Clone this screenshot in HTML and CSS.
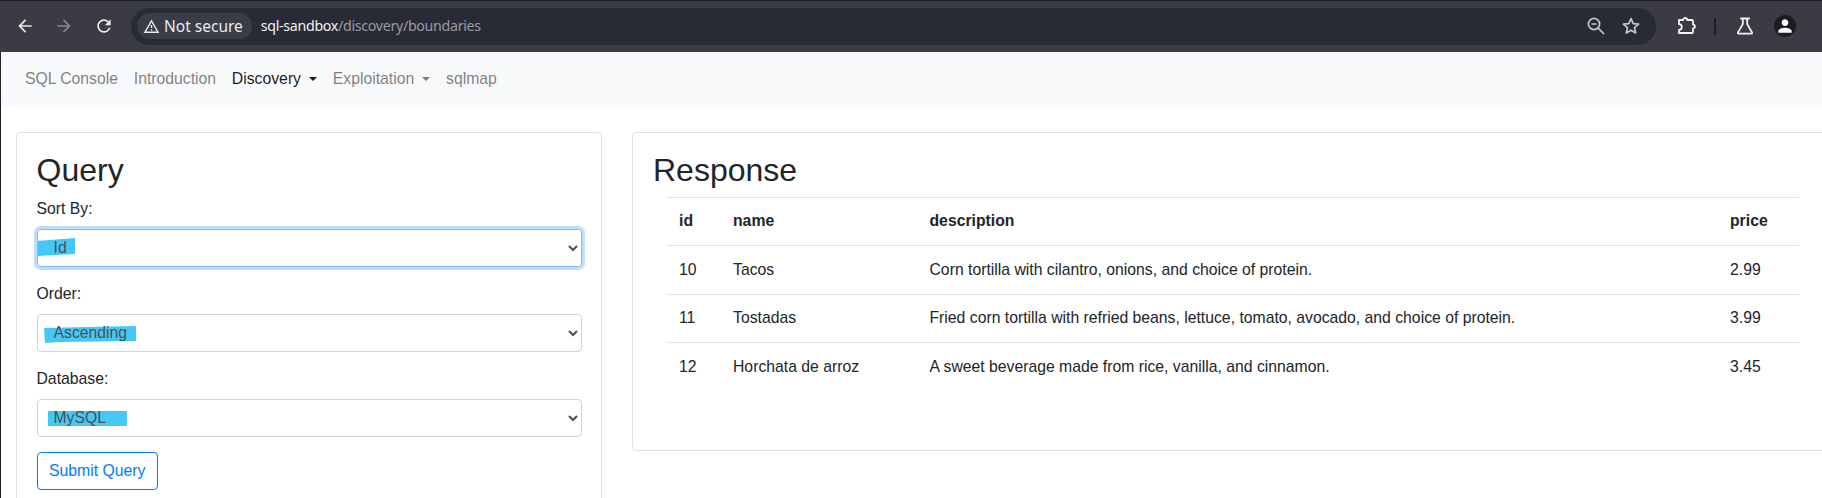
FILE: index.html
```html
<!DOCTYPE html>
<html lang="en">
<head>
<meta charset="utf-8">
<title>SQL Sandbox</title>
<link rel="stylesheet" href="styles.css">
</head>
<body>
<header class="chrome">
  <button class="tb tb-back" aria-label="Back"><svg viewBox="0 0 24 24" width="20" height="20"><path d="M20 11H7.83l5.59-5.59L12 4l-8 8 8 8 1.41-1.41L7.83 13H20v-2z"/></svg></button>
  <button class="tb tb-fwd" aria-label="Forward"><svg viewBox="0 0 24 24" width="20" height="20"><path d="M12 4l-1.41 1.41L16.17 11H4v2h12.17l-5.58 5.59L12 20l8-8z"/></svg></button>
  <button class="tb tb-reload" aria-label="Reload"><svg viewBox="0 0 24 24" width="20" height="20"><path d="M17.65 6.35A7.958 7.958 0 0 0 12 4c-4.42 0-7.99 3.58-7.99 8s3.57 8 7.99 8c3.73 0 6.84-2.55 7.73-6h-2.08A5.99 5.99 0 0 1 12 18c-3.31 0-6-2.69-6-6s2.69-6 6-6c1.66 0 3.14.69 4.22 1.78L13 11h7V4l-2.35 2.35z"/></svg></button>
  <div class="omnibox">
    <span class="chip"><svg viewBox="0 0 24 24" width="17" height="17"><path d="M12 5.99L19.53 19H4.47L12 5.99M12 2L1 21h22L12 2zm1 14h-2v2h2v-2zm0-6h-2v4h2v-4z"/></svg>Not secure</span>
    <span class="url"><span class="host">sql-sandbox</span>/discovery/boundaries</span>
    <span class="omni-actions">
      <svg class="omni-line" viewBox="0 0 20 20" width="20" height="20"><circle cx="8" cy="8" r="5.6"/><path d="M5.5 8h5M12.2 12.2L18 18"/></svg>
      <svg class="omni-line" viewBox="0 0 20 20" width="20" height="20"><polygon points="10,2.6 12.2,7.6 17.6,8.1 13.5,11.7 14.7,17 10,14.2 5.3,17 6.5,11.7 2.4,8.1 7.8,7.6"/></svg>
    </span>
  </div>
  <div class="tools">
    <svg class="tool-line" viewBox="0 0 20 20" width="20" height="20"><path d="M3 4h4.2a2 2 0 0 1 4 0H16a1 1 0 0 1 1 1v3.6a1.9 1.9 0 0 1 0 3.8V16a1 1 0 0 1-1 1H3v-3.2a2.8 2.8 0 0 0 0-5.6z"/></svg>
    <span class="tool-sep"></span>
    <svg class="tool-line" viewBox="0 0 20 20" width="20" height="20"><path d="M6 2.5h8M7.8 2.5v5.6L3 16.4c-.3.6 0 1.2.7 1.2h12.6c.7 0 1-.6.7-1.2l-4.8-8.3V2.5"/></svg>
    <span class="avatar"><svg viewBox="0 0 24 24" width="20" height="20"><path d="M12 12c2.21 0 4-1.79 4-4s-1.79-4-4-4-4 1.79-4 4 1.79 4 4 4zm0 2c-2.67 0-8 1.34-8 4v2h16v-2c0-2.66-5.33-4-8-4z"/></svg></span>
  </div>
</header>
<div class="page">
  <nav class="navbar">
    <a class="nav-link">SQL Console</a>
    <a class="nav-link">Introduction</a>
    <a class="nav-link active caret">Discovery</a>
    <a class="nav-link caret">Exploitation</a>
    <a class="nav-link">sqlmap</a>
  </nav>
  <main class="content">
    <section class="card card-query">
      <h2 class="card-title">Query</h2>
      <form>
        <div class="form-group">
          <label class="label" for="sort">Sort By:</label>
          <div class="select-wrap">
            <svg class="mark mark-1" viewBox="0 0 38 18" width="38" height="18"><polygon points="0,3 38,0 38,16 0,18"/></svg>
            <select class="select select-focus" id="sort"><option>Id</option></select>
          </div>
        </div>
        <div class="form-group">
          <label class="label" for="order">Order:</label>
          <div class="select-wrap">
            <svg class="mark mark-2" viewBox="0 0 92 17" width="92" height="17"><polygon points="0,2 92,0 92,15 17,16 1,17"/></svg>
            <select class="select" id="order"><option>Ascending</option></select>
          </div>
        </div>
        <div class="form-group">
          <label class="label" for="db">Database:</label>
          <div class="select-wrap">
            <svg class="mark mark-3" viewBox="0 0 79 15" width="79" height="15"><polygon points="0,0 79,0 79,15 0,15"/></svg>
            <select class="select" id="db"><option>MySQL</option></select>
          </div>
        </div>
        <button class="btn" type="button">Submit Query</button>
      </form>
    </section>
    <section class="card card-response">
      <h2 class="card-title">Response</h2>
      <table class="table">
        <thead>
          <tr><th class="col-id">id</th><th class="col-name">name</th><th class="col-desc">description</th><th class="col-price">price</th></tr>
        </thead>
        <tbody>
          <tr><td>10</td><td>Tacos</td><td>Corn tortilla with cilantro, onions, and choice of protein.</td><td>2.99</td></tr>
          <tr><td>11</td><td>Tostadas</td><td>Fried corn tortilla with refried beans, lettuce, tomato, avocado, and choice of protein.</td><td>3.99</td></tr>
          <tr><td>12</td><td>Horchata de arroz</td><td>A sweet beverage made from rice, vanilla, and cinnamon.</td><td>3.45</td></tr>
        </tbody>
      </table>
    </section>
  </main>
</div>
</body>
</html>
```
FILE: styles.css
```css
* { box-sizing: border-box; }
html, body { margin: 0; height: 100%; }
body {
  width: 1822px;
  height: 498px;
  overflow: hidden;
  background: #fff;
  color: #212529;
  font: 15.75px/24px "Liberation Sans", Arial, sans-serif;
}

.chrome {
  display: flex;
  align-items: center;
  height: 52px;
  padding: 0 0 1px 1px;
  background: #3a3b43;
  border-top: 1px solid #20222b;
  font-family: "Noto Sans", sans-serif;
}
.tb {
  display: flex;
  align-items: center;
  justify-content: center;
  flex: none;
  width: 39px;
  padding: 0;
  border: 0;
  background: none;
}
.tb-back { margin-left: 4px; }
.tb svg { fill: #e8eaed; }
.tb-fwd svg { fill: #85878c; }
.tb-reload {
  width: 41px;
  margin-right: 7px;
}

.omnibox {
  display: flex;
  align-items: center;
  flex: none;
  width: 1525px;
  height: 37px;
  padding: 0 6px;
  border-radius: 19px;
  background: #282a35;
}
.chip {
  display: flex;
  align-items: center;
  gap: 4.5px;
  height: 26px;
  padding: 0 9px 0 5.5px;
  border-radius: 13px;
  background: #3a3c47;
  color: #e8eaed;
  font-size: 15.5px;
}
.chip svg { fill: #e8eaed; }
.url {
  margin-left: 9px;
  color: #9a9ca3;
  font-size: 14.2px;
  letter-spacing: -.3px;
}
.host { color: #f1f3f4; }
.omni-actions {
  display: flex;
  align-items: center;
  gap: 15px;
  margin-left: auto;
  margin-right: 9px;
}
.omni-line {
  fill: none;
  stroke: #c4c6ca;
  stroke-width: 1.7;
  stroke-linejoin: round;
}

.tools {
  display: flex;
  align-items: center;
  margin-left: 20px;
}
.tool-line {
  fill: none;
  stroke: #f1f3f4;
  stroke-width: 1.8;
  stroke-linejoin: round;
  stroke-linecap: round;
}
.tool-sep {
  width: 2px;
  height: 17px;
  margin: 0 19px 0 18px;
  background: #1c1e26;
}
.avatar {
  display: flex;
  align-items: center;
  justify-content: center;
  width: 22px;
  height: 22px;
  margin-left: 19px;
  border-radius: 50%;
  background: #1b1c1f;
}
.avatar svg { fill: #fff; }

.page {
  height: 446px;
  border-left: 1px solid #20222b;
}
.navbar {
  display: flex;
  align-items: center;
  height: 55px;
  padding: 0 0 2px 16px;
  background: #f8f9fa;
}
.nav-link {
  padding: 8px 7.9px;
  color: rgba(0, 0, 0, .5);
}
.nav-link.active { color: rgba(0, 0, 0, .9); }
.caret::after {
  content: "";
  display: inline-block;
  margin-left: 8px;
  vertical-align: 3px;
  border-top: 4.8px solid;
  border-right: 4.8px solid transparent;
  border-left: 4.8px solid transparent;
}

.content {
  display: flex;
  gap: 30px;
  align-items: flex-start;
  padding: 25px 0 0 15px;
}
.card {
  flex: none;
  padding: 18px 20px 20px;
  border: 1px solid #dfdfdf;
  border-radius: 4px;
  background: #fff;
}
.card-query {
  width: 586px;
  padding-left: 19.5px;
  padding-right: 19.5px;
}
.card-response {
  width: 1240px;
  height: 319px;
}
.card-title {
  margin: 0 0 7.5px;
  font-size: 32px;
  font-weight: 400;
  line-height: 38px;
}

.form-group { margin-bottom: 15px; }
.label {
  display: block;
  margin-bottom: 8px;
}
.select-wrap { position: relative; }
.select {
  position: relative;
  display: block;
  width: 100%;
  height: 38px;
  padding: 6px 12px;
  border: 1px solid #ced4da;
  border-radius: 4px;
  background: transparent;
  color: #495057;
  font: inherit;
}
.select-focus {
  border-color: #80bdff;
  box-shadow: 0 0 0 3px rgba(0, 123, 255, .25);
}
.mark {
  position: absolute;
  fill: #45c8f5;
}
.mark-1 { left: 0; top: 9px; }
.mark-2 { left: 7px; top: 12px; }
.mark-3 { left: 11px; top: 12px; }
.btn {
  display: block;
  height: 38px;
  padding: 0 11.5px;
  border: 1px solid #007bff;
  border-radius: 4px;
  background: #fff;
  color: #007bff;
  font: inherit;
}

.table {
  width: 1132px;
  margin-top: 3px;
  margin-left: 14px;
  border-collapse: collapse;
  table-layout: fixed;
}
.table th, .table td {
  height: 48.5px;
  padding: 0 12px;
  border-top: 1px solid #dee2e6;
  text-align: left;
  white-space: nowrap;
}
.table th { font-weight: 700; }
.table thead th { border-bottom: 1px solid #dee2e6; }
.col-id { width: 54px; }
.col-name { width: 196.5px; }
.col-desc { width: 800.5px; }
.col-price { width: 81px; }
```
